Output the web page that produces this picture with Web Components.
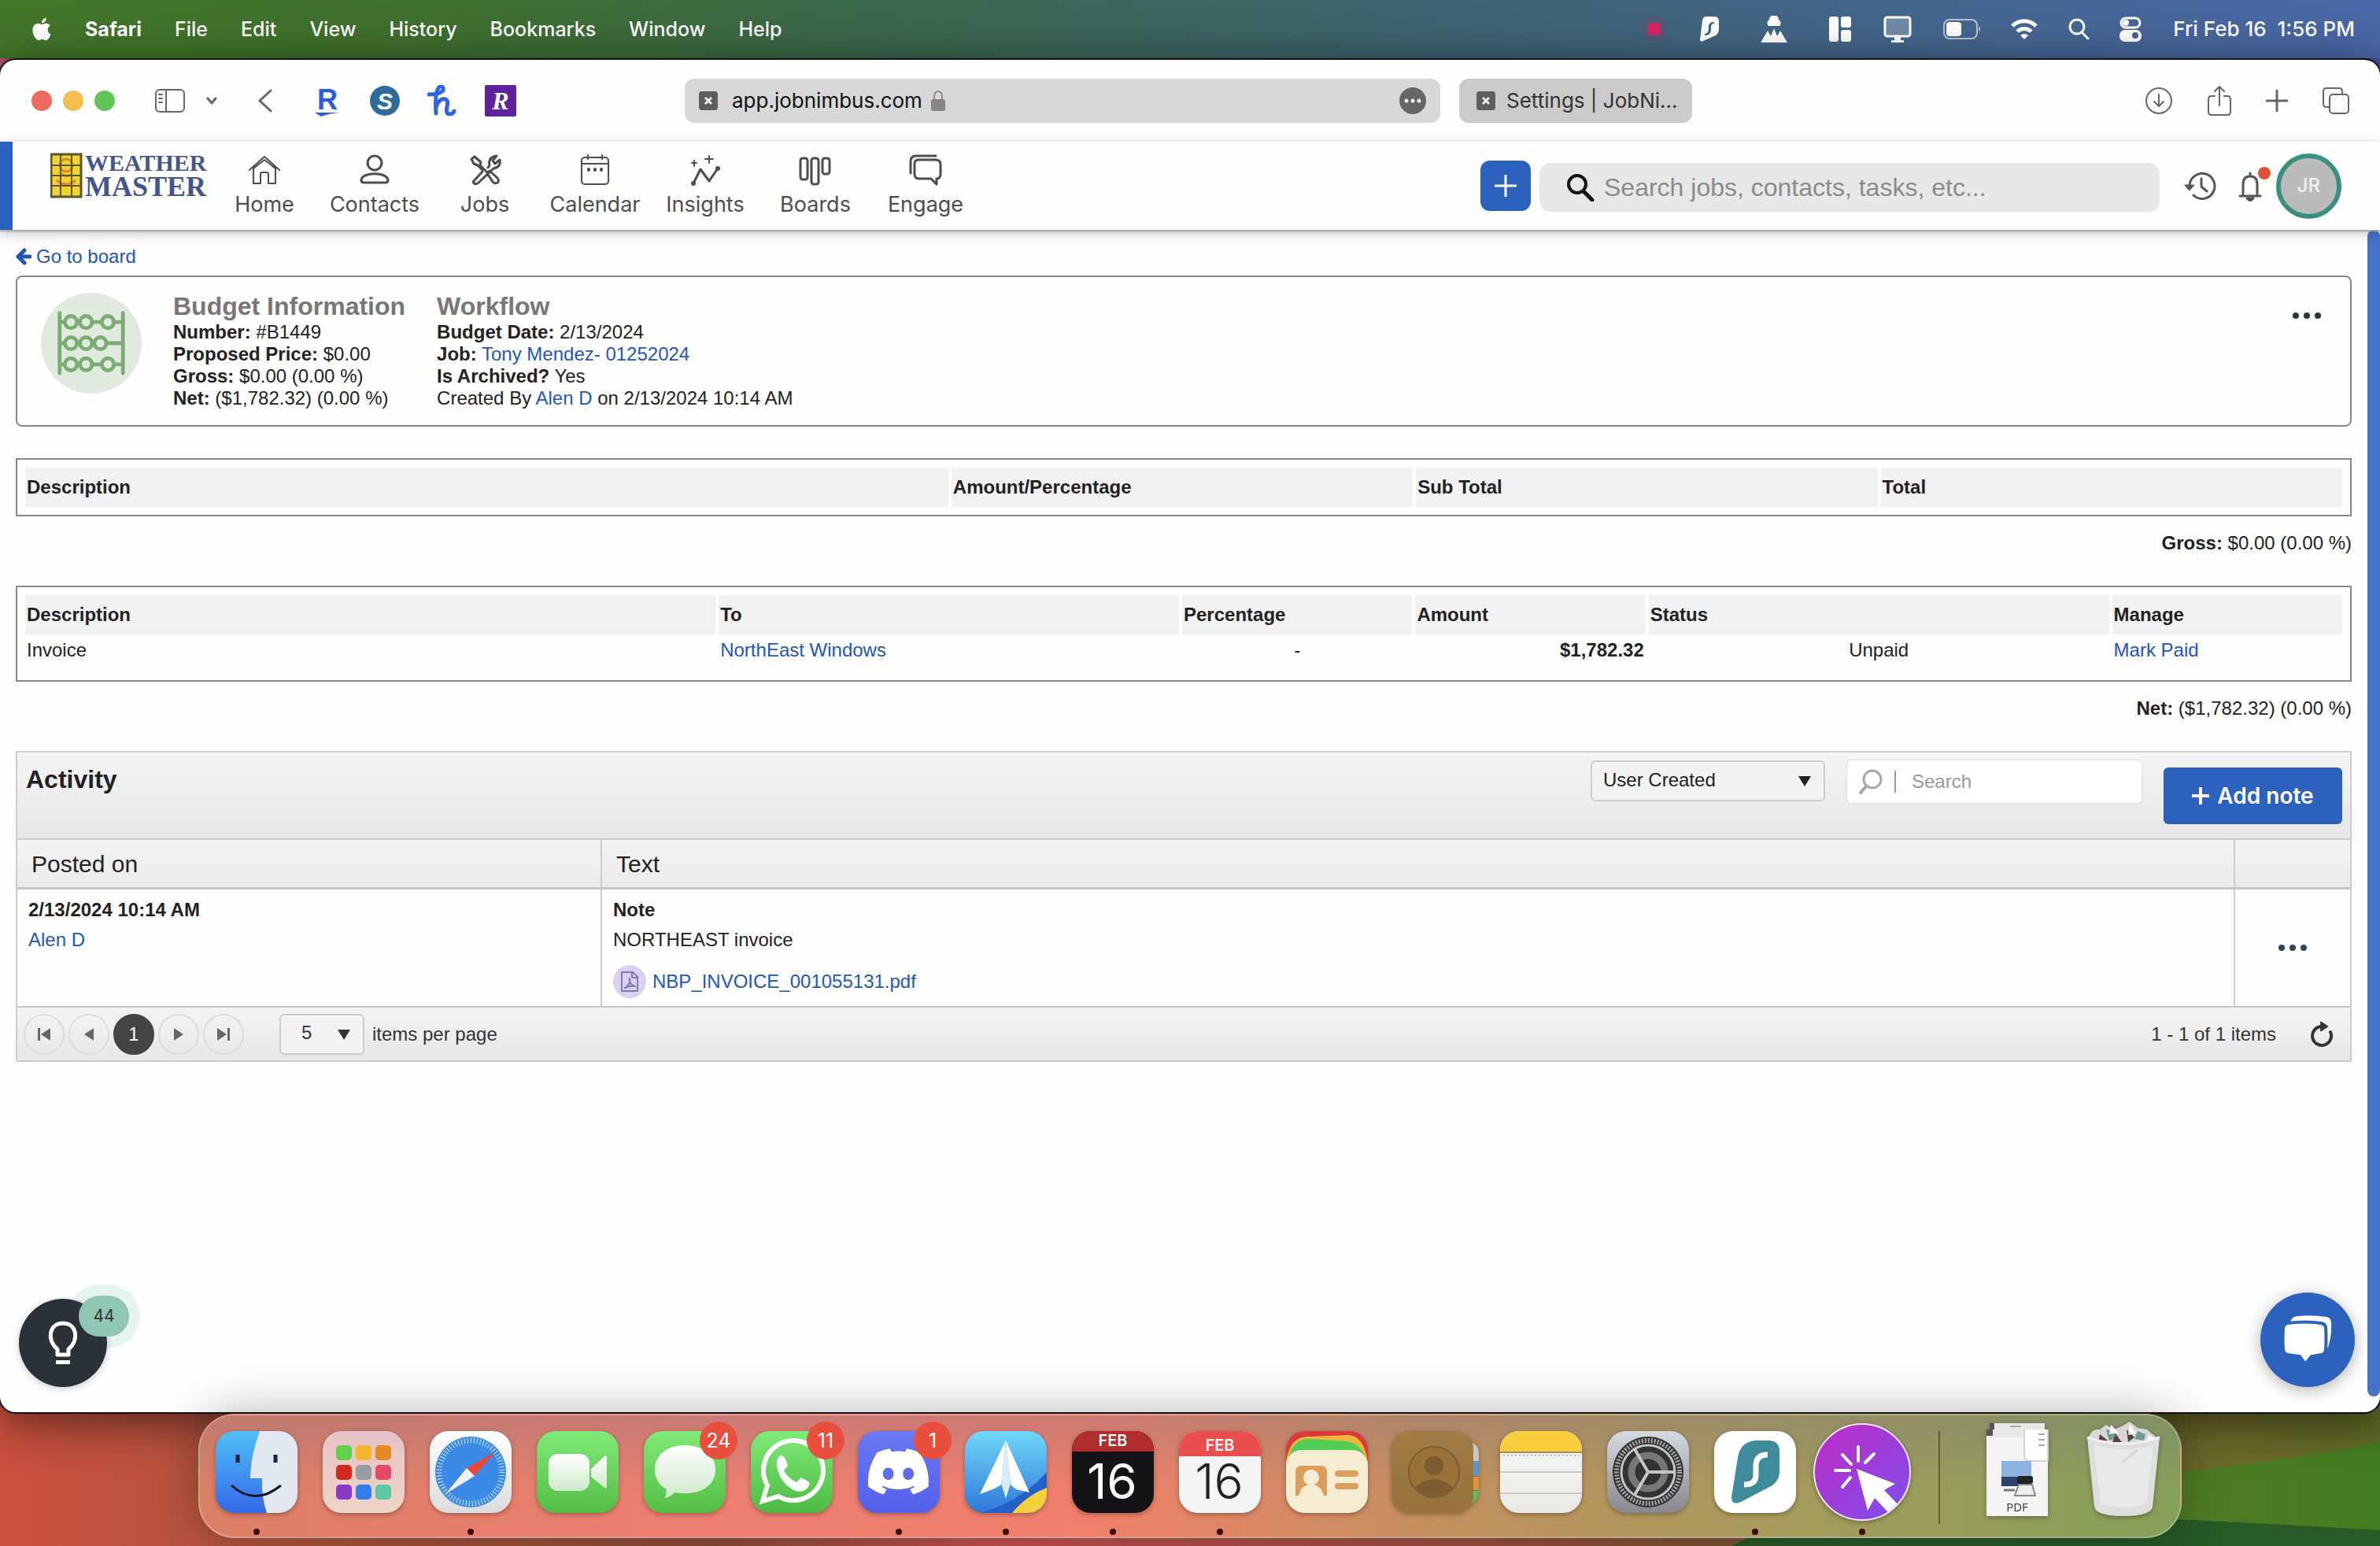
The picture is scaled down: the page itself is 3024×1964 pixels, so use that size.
<!DOCTYPE html>
<html lang="en">
<head>
<meta charset="utf-8">
<title>app.jobnimbus.com</title>
<style>
    html, body { margin: 0; min-height: 100vh; }
    body {
        background: #3f5f63;
        font-family: "Liberation Sans", Arial, sans-serif;
        font-size: 24px;
        line-height: 28px;
        color: #222;
    }
</style>
</head>
<body>
<desk-top></desk-top>

<script>
const reset = /*css*/`
    *, *::before, *::after { box-sizing: border-box; }
    button, input, select { font: inherit; color: inherit; margin: 0; padding: 0; border: 0; background: none; outline: 0; }
    button { display: flex; align-items: center; justify-content: center; }
    a { color: #2257b4; text-decoration: none; }
    svg { display: block; flex: none; }
    ul { list-style: none; margin: 0; padding: 0; }
    h2 { margin: 0; }
`

class BaseElement extends HTMLElement {
    constructor() {
        super();
        this.shadow = this.attachShadow({ mode: 'open' });
    }

    connectedCallback() {
        this.shadow.innerHTML = `<style>${reset}${this.css()}</style>${this.render()}`
    }

    css() { return "" }
    render() { return "" }
}

/* ---------- icons ---------- */

const line = (w, h, box, body, width = 2, color = "currentColor") =>
    `<svg width="${w}" height="${h}" viewBox="${box}" fill="none" stroke="${color}" stroke-width="${width}" stroke-linecap="round" stroke-linejoin="round">${body}</svg>`

const solid = (w, h, box, body) =>
    `<svg width="${w}" height="${h}" viewBox="${box}" fill="currentColor">${body}</svg>`

const icons = {
    apple: solid(26, 32, "1 0 22 24", `<path d="M12.152 6.896c-.948 0-2.415-1.078-3.96-1.04-2.04.027-3.91 1.183-4.961 3.014-2.117 3.675-.546 9.103 1.519 12.09 1.013 1.454 2.208 3.09 3.792 3.039 1.52-.065 2.09-.987 3.935-.987 1.831 0 2.35.987 3.96.948 1.637-.026 2.676-1.48 3.676-2.948 1.156-1.688 1.636-3.325 1.662-3.415-.039-.013-3.182-1.221-3.22-4.857-.026-3.04 2.48-4.494 2.597-4.559-1.429-2.09-3.623-2.324-4.39-2.376-2-.156-3.675 1.09-4.61 1.09zM15.53 3.83c.843-1.012 1.4-2.427 1.245-3.83-1.207.052-2.662.805-3.532 1.818-.78.896-1.454 2.338-1.273 3.714 1.338.104 2.715-.688 3.559-1.701"/>`),
    record: `<svg width="34" height="36" viewBox="0 0 34 36"><circle cx="17" cy="18" r="14" fill="none" stroke="#8c3a6a" stroke-width="2" opacity=".7"/><rect x="9" y="10" width="16" height="16" rx="3" fill="#d8275c"/></svg>`,
    surf: solid(26, 34, "0 0 26 34", `<path fill-rule="evenodd" d="M9 1h10q6 0 6 6v10q0 5-4 8L5 32q-4 2-4-2L4 6q1-5 5-5zM19 8c-5 0-7 2-7 6 0 5 0 8-5 9v2c6 0 8-3 8-8s0-7 4-7z"/>`),
    peaks: `<svg class="peaks" width="34" height="34" viewBox="0 0 34 34" fill="currentColor"><path d="M10 13a5 5 0 0 1 1-8 6 6 0 0 1 12 0 5 5 0 0 1 1 8zM0 34l9-15 4 7 4-10 4 10 4-7 9 15z"/></svg>`,
    panes: solid(30, 32, "0 0 30 32", `<rect x="1" y="0" width="12" height="32" rx="3"/><rect x="16" y="0" width="13" height="14" rx="3"/><rect x="16" y="17" width="13" height="15" rx="3"/>`),
    display: `<svg width="36" height="34" viewBox="0 0 36 34"><rect x="2" y="2" width="32" height="24" rx="3" fill="#6f8ba5" stroke="#fff" stroke-width="3"/><path d="M14 27h8v4h4v3H10v-3h4z" fill="#fff"/></svg>`,
    battery: `<svg width="48" height="26" viewBox="0 0 48 26"><rect x="1" y="1" width="42" height="24" rx="7" fill="none" stroke="#b5c3d2" stroke-width="2"/><rect x="4" y="4" width="19" height="18" rx="4" fill="#fff"/><path d="M45 9v8q4-4 0-8z" fill="#b5c3d2"/></svg>`,
    wifi: `<svg width="34" height="28" viewBox="0 0 34 28" fill="none" stroke="#fff" stroke-width="5"><path d="M2 10a21 21 0 0 1 30 0"/><path d="M8 17a13 13 0 0 1 18 0"/><path d="M17 27l-5-5a7 7 0 0 1 10 0z" fill="#fff" stroke="none"/></svg>`,
    spotlight: line(28, 30, "0 0 28 30", `<circle cx="12" cy="12" r="9"/><path d="M19 20l7 7"/>`, 3),
    control: `<svg width="28" height="32" viewBox="0 0 28 32"><rect x="2" y="2" width="24" height="12" rx="6" fill="none" stroke="#fff" stroke-width="3"/><circle cx="8" cy="8" r="4" fill="#fff"/><rect x="0" y="17" width="28" height="15" rx="7" fill="#fff"/><circle cx="20" cy="24" r="4" fill="#44638f"/></svg>`,

    sidebar: line(40, 32, "0 0 40 32", `<rect x="2" y="2" width="36" height="28" rx="5"/><path d="M15 2v28M6 8h4M6 13h4M6 18h4"/>`, 2),
    down: line(14, 10, "0 0 14 10", `<path d="M2 2l5 6 5-6"/>`, 3),
    back: line(18, 30, "0 0 18 30", `<path d="M16 2L2 15l14 13"/>`, 3),
    closeTab: `<svg width="24" height="24" viewBox="0 0 24 24"><rect width="24" height="24" rx="4" fill="#5e5e5e"/><path d="M8 8l8 8M16 8l-8 8" stroke="#eee" stroke-width="3"/></svg>`,
    lock: `<svg width="20" height="28" viewBox="0 0 20 28"><path d="M5 13V8a5 6 0 0 1 10 0v5" fill="none" stroke="#8a8a8a" stroke-width="2"/><rect x="1" y="12" width="18" height="15" rx="3" fill="#858585"/></svg>`,
    more: `<svg width="34" height="34" viewBox="0 0 34 34"><circle cx="17" cy="17" r="17" fill="#666"/><g fill="#eee"><circle cx="9" cy="17" r="2.5"/><circle cx="17" cy="17" r="2.5"/><circle cx="25" cy="17" r="2.5"/></g></svg>`,
    download: line(36, 36, "0 0 36 36", `<circle cx="18" cy="18" r="16"/><path d="M18 10v15M12 19l6 6 6-6"/>`, 2),
    share: line(32, 40, "0 0 32 40", `<path d="M10 14H6q-4 0-4 4v16q0 4 4 4h20q4 0 4-4V18q0-4-4-4h-4M16 26V2M10 8l6-6 6 6"/>`, 2),
    plus: line(28, 28, "0 0 28 28", `<path d="M14 1v26M1 14h26"/>`, 3),
    tabs: line(36, 36, "0 0 36 36", `<rect x="10" y="10" width="24" height="24" rx="4"/><path d="M10 26H6q-4 0-4-4V6q0-4 4-4h16q4 0 4 4v4"/>`, 2),

    home: line(44, 40, "0 0 44 40", `<path d="M3 20L22 3l19 17M8 18v19h9V25q0-2 2-2h6q2 0 2 2v12h9V18L22 7z"/>`, 2),
    contacts: line(44, 40, "0 0 44 40", `<ellipse cx="22" cy="11" rx="9" ry="9"/><path d="M5 33c0-11 34-11 34 0q0 3-4 3H9q-4 0-4-3z"/>`, 3),
    jobs: line(44, 40, "0 0 44 40", `<path d="M5 6l4-3 8 7-1 4 8 8M26 17l2-3q-2-8 5-11l4-1-5 6 3 4 6-5q2 9-8 11L13 37q-4 2-6-2l12-13M5 6l3 6 5 2 6 6M25 24l3-3 10 9q3 4 0 6t-6-1z"/>`, 3),
    calendar: line(44, 40, "0 0 44 40", `<rect x="5" y="4" width="34" height="34" rx="4"/><path d="M5 12h34M13 1v5M31 1v5"/><path d="M14 19v1M22 19v1M30 19v1" stroke-width="4"/>`, 2),
    insights: line(44, 40, "0 0 44 40", `<path d="M7 37l9-18 11 15L38 18" stroke-width="3"/><circle cx="7" cy="37" r="2"/><circle cx="38" cy="18" r="2"/><path d="M27 2v9M22 6h10M8 8v7M5 11h6"/>`, 2),
    boards: line(44, 40, "0 0 44 40", `<rect x="3" y="5" width="9" height="27" rx="3"/><rect x="17" y="5" width="9" height="33" rx="3"/><rect x="31" y="5" width="9" height="20" rx="3"/>`, 3),
    engage: line(44, 40, "0 0 44 40", `<path d="M13 7h22q6 0 6 6v12q0 6-5 6v7l-7-7H14q-6 0-6-6V12q0-5 5-5z"/><path d="M3 24V9q0-7 7-7h25"/>`, 3),
    find: line(36, 36, "0 0 36 36", `<circle cx="14" cy="14" r="11"/><path d="M22 23l11 11" stroke-width="5"/>`, 4),
    history: line(42, 38, "0 0 42 38", `<path d="M7 20a16 16 0 1 1 5 11M22 10v10l7 6"/><path d="M1 18h12l-6 7z" fill="currentColor" stroke-width="1"/>`, 3),
    bell: line(32, 40, "0 0 32 40", `<path d="M3 33h26M7 32V18q0-10 9-10t9 10v14M16 8V4"/><path d="M12 36h8l-4 3z" fill="currentColor"/>`, 3),
    arrow: line(20, 22, "0 0 20 22", `<path d="M18 11H4M11 3l-8 8 8 8"/>`, 5),
    abacus: line(92, 84, "0 0 96 84", `<path d="M6 2v80M90 2v80M6 14h84M6 42h84M6 70h84"/><g fill="#e0eade"><circle cx="21" cy="14" r="8"/><circle cx="41" cy="14" r="8"/><circle cx="70" cy="14" r="8"/><circle cx="21" cy="42" r="8"/><circle cx="41" cy="42" r="8"/><circle cx="60" cy="42" r="8"/><circle cx="21" cy="70" r="8"/><circle cx="41" cy="70" r="8"/><circle cx="70" cy="70" r="8"/></g>`, 5, "#7bac74"),
    dots: solid(38, 10, "0 0 38 10", `<circle cx="5" cy="5" r="4"/><circle cx="19" cy="5" r="4"/><circle cx="33" cy="5" r="4"/>`),
    caret: solid(16, 14, "0 0 16 14", `<path d="M0 1h16L8 14z"/>`),
    lens: line(32, 34, "0 0 32 34", `<circle cx="18" cy="14" r="11"/><path d="M10 23l-7 8" stroke-width="4"/>`, 3, "#a8a8a8"),
    pdf: line(42, 42, "0 0 42 42", `<circle cx="21" cy="21" r="21" fill="#d8d2ec" stroke="none"/><path d="M11 9h14l6 6v18H11zM24 9v7h7M15 29q8-5 6-12-1 8 7 10-7-1-13 2z"/>`, 2, "#8478b4"),
    first: solid(20, 16, "0 0 20 16", `<path d="M2 0h3v16H2zM18 0v16L6 8z"/>`),
    prev: solid(20, 16, "0 0 20 16", `<path d="M16 0v16L4 8z"/>`),
    next: solid(20, 16, "0 0 20 16", `<path d="M4 0v16l12-8z"/>`),
    last: solid(20, 16, "0 0 20 16", `<path d="M15 0h3v16h-3zM2 0v16l12-8z"/>`),
    refresh: line(32, 34, "0 0 32 34", `<path d="M15 7A12 12 0 1 0 27 14"/><path d="M15 1l9 6-9 6z" fill="currentColor" stroke-width="1"/>`, 4),
    bulb: line(40, 56, "0 0 40 56", `<path d="M13 43V36C-1 25 2 3 20 3s21 22 7 33v7z"/><path d="M12 51h16v3H12z" fill="currentColor" stroke-width="2"/>`, 5),
    chat: solid(64, 62, "0 0 64 62", `<path d="M11 6q2-4 7-5 20-2 38 1 6 1 6 7 1 16-4 32l-5 2V14q-20-6-42-6z"/><path d="M6 10q22-3 44 0 4 1 5 5 1 15 0 29-1 5-5 6l-13 2-8 10-7-10-15-2q-5-1-6-6-1-14 0-28 1-5 5-6z" stroke="#2c62bd" stroke-width="4"/>`)
}

/* ---------- desktop and menu bar ---------- */

class DeskTop extends BaseElement {
    css() {
        return /*css*/`
            :host { display: flex; flex-direction: column; min-height: 100vh; position: relative; overflow: hidden; }
            .paper { position: absolute; left: 0; bottom: 0; width: 100%; height: 200px; }
            .corner { position: absolute; top: 70px; left: 0; width: 100%; height: 60px; background: linear-gradient(90deg, #b75a78, #14181c 2%, #14181c 98%, #4a4fb0); }
            main {
                flex: 1; display: flex; flex-direction: column; position: relative; min-width: 0;
                margin-top: 2px; background: #fefefe; border-radius: 20px; overflow: hidden;
                box-shadow: 0 0 0 2px #151015, 0 10px 60px rgba(0, 0, 0, .6);
            }
            mac-dock { margin: 2px auto 10px; }
        `
    }

    render() {
        return /*html*/`
            <svg class="paper" viewBox="0 0 3024 200" preserveAspectRatio="none">
                <defs>
                    <linearGradient id="sky">
                        <stop offset="0" stop-color="#cb503e"/><stop offset=".1" stop-color="#b3543f"/>
                        <stop offset=".3" stop-color="#8e4c36"/><stop offset=".42" stop-color="#c8524f"/>
                        <stop offset=".65" stop-color="#94503a"/><stop offset=".85" stop-color="#535a22"/>
                        <stop offset=".93" stop-color="#6f6a2b"/><stop offset="1" stop-color="#5d6a25"/>
                    </linearGradient>
                    <linearGradient id="hill"><stop offset="0" stop-color="#66762a"/><stop offset="1" stop-color="#447d22"/></linearGradient>
                </defs>
                <rect width="3024" height="200" fill="url(#sky)"/>
                <path d="M2300 150Q2820 110 3024 68V200H2300z" fill="url(#hill)"/>
                <path d="M2300 150Q2700 160 3024 180V200H2200z" fill="#275a27"/>
            </svg>
            <div class="corner"></div>
            <menu-bar></menu-bar>
            <main>
                <browser-bar></browser-bar>
                <app-header></app-header>
                <budget-page></budget-page>
            </main>
            <mac-dock></mac-dock>
        `
    }
}

class MenuBar extends BaseElement {
    css() {
        return /*css*/`
            :host {
                display: flex; align-items: center; height: 74px; padding: 0 32px 0 40px; position: relative;
                background: linear-gradient(90deg, #43762a 0, #3f6f2d 18%, #3a6849 35%, #3d6370 60%, #44668c 80%, #4a67a8);
                color: #fff; font: 500 25px/30px Inter, "Noto Sans", sans-serif;
            }
            nav, .status, .tail { display: flex; align-items: center; }
            nav { gap: 42px; }
            nav b { font-weight: 700; }
            .status { margin-left: auto; gap: 40px; }
            .peaks { margin: 0 12px; }
            .tail { gap: 38px; }
            time { font-size: 26px; white-space: pre; }
        `
    }

    render() {
        const menus = ["File", "Edit", "View", "History", "Bookmarks", "Window", "Help"]
        return /*html*/`
            <nav>
                ${icons.apple}
                <button><b>Safari</b></button>
                ${menus.map(m => `<button>${m}</button>`).join("")}
            </nav>
            <div class="status">
                ${icons.record}${icons.surf}${icons.peaks}${icons.panes}${icons.display}
                <div class="tail">${icons.battery}${icons.wifi}${icons.spotlight}${icons.control}</div>
                <time>Fri Feb 16  1:56 PM</time>
            </div>
        `
    }
}

/* ---------- browser toolbar ---------- */

class BrowserBar extends BaseElement {
    css() {
        return /*css*/`
            :host {
                display: grid; grid-template-columns: 870px minmax(0, 1fr) 296px 874px; align-items: center;
                height: 104px; flex: none; color: #666; font: 400 26px/30px Inter, "Noto Sans", sans-serif;
            }
            .left, .right, .bar { display: flex; align-items: center; }
            .left { padding-left: 40px; }
            .light { width: 26px; height: 26px; border-radius: 50%; margin-right: 14px; }
            .left .side { margin-left: 36px; }
            .left .drop { margin: 0 52px 0 26px; }
            .marks { display: flex; align-items: center; gap: 35px; margin-left: 51px; }
            .bar { height: 56px; border-radius: 12px; background: #d8d8d8; padding: 0 18px; color: #111; }
            .bar span { margin-left: 18px; }
            .bar button { margin-left: 10px; }
            .bar .more { margin-left: auto; }
            .tab { background: #cbcbcb; padding: 0 0 0 22px; color: #333; }
            .tab span { margin-left: 14px; }
            .gap { margin-right: 24px; }
            .right { justify-content: flex-end; gap: 43px; padding-right: 38px; }
        `
    }

    render() {
        return /*html*/`
            <div class="left">
                <i class="light" style="background:#ec6a5e"></i>
                <i class="light" style="background:#f4bd4f"></i>
                <i class="light" style="background:#61c454"></i>
                <button class="side" aria-label="Sidebar">${icons.sidebar}</button>
                <button class="drop" aria-label="Tab groups">${icons.down}</button>
                <button aria-label="Back">${icons.back}</button>
                <div class="marks">
                    <svg width="38" height="48" viewBox="0 0 38 48"><text x="6" y="35" font-family="Liberation Sans" font-weight="700" font-size="36" fill="#2a5be0">R</text><path d="M3 39h32q-14 1-24 5z" fill="#2a5be0"/></svg>
                    <svg width="38" height="40" viewBox="0 0 38 40"><circle cx="19" cy="20" r="19" fill="#2d6c9b"/><text x="19" y="31" text-anchor="middle" font-family="Liberation Sans" font-style="italic" font-weight="700" font-size="30" fill="#fff">S</text></svg>
                    <svg width="38" height="40" viewBox="0 0 38 40" fill="none" stroke="#2f65e4" stroke-width="5" stroke-linecap="round"><path d="M2 12q14 0 18-5 1-6-4-5-7 4-5 34M11 28q4-12 12-10 4 2 2 9-2 10 3 10 5 0 6-4"/></svg>
                    <svg width="40" height="40" viewBox="0 0 40 40"><rect width="40" height="40" rx="2" fill="#5f249b"/><text x="20" y="31" text-anchor="middle" font-family="Liberation Serif" font-style="italic" font-weight="700" font-size="32" fill="#fff">R</text></svg>
                </div>
            </div>
            <div class="bar gap">
                ${icons.closeTab}<span>app.jobnimbus.com</span>
                <button aria-label="Site security">${icons.lock}</button>
                <button class="more" aria-label="More">${icons.more}</button>
            </div>
            <div class="bar tab">${icons.closeTab}<span>Settings | JobNi...</span></div>
            <div class="right">
                <button aria-label="Downloads">${icons.download}</button>
                <button aria-label="Share">${icons.share}</button>
                <button aria-label="New tab">${icons.plus}</button>
                <button aria-label="Tab overview">${icons.tabs}</button>
            </div>
        `
    }
}

/* ---------- app header ---------- */

class NavItem extends BaseElement {
    css() {
        return /*css*/`
            :host { display: block; width: 140px; }
            a { display: flex; flex-direction: column; align-items: center; gap: 8px; color: #4d4d4d; font: 400 27px/32px Inter, "Noto Sans", sans-serif; }
        `
    }

    render() {
        return /*html*/`<a href="#">${icons[this.getAttribute("icon")]}<slot></slot></a>`
    }
}

class AppHeader extends BaseElement {
    css() {
        return /*css*/`
            :host {
                display: flex; align-items: center; height: 112px; flex: none; position: relative;
                border-left: 16px solid #2c62bd; padding: 0 49px 0 48px; background: #fefefe;
                box-shadow: 0 2px 2px #a5a5a5, 0 4px 14px rgba(0, 0, 0, .25);
            }
            nav { display: flex; }
            .logo { margin-bottom: 24px; }
            .tools { margin-left: auto; display: flex; align-items: center; color: #555; }
            .add { width: 64px; height: 64px; border-radius: 12px; background: #2c62bd; color: #fff; margin-right: 11px; }
            label { display: flex; align-items: center; width: 788px; height: 62px; margin-top: 3px; border-radius: 14px; background: #e8e8e8; padding-left: 34px; color: #111; gap: 12px; }
            input { flex: 1; font-size: 32px; line-height: 36px; color: #333; }
            input::placeholder { color: #8b8b8b; opacity: 1; }
            .tools .history { margin: 0 26px 0 31px; }
            .bell { position: relative; margin-right: 17px; }
            .bell i { position: absolute; right: -10px; top: -4px; width: 16px; height: 16px; border-radius: 50%; background: #e0503d; }
            .avatar { width: 83px; height: 83px; border-radius: 50%; border: 6px solid #3a9080; background: #bbb; color: #f2f2f2; font: 500 24px/28px Inter, sans-serif; }
        `
    }

    render() {
        return /*html*/`
            <svg class="logo" width="202" height="74" viewBox="0 -8 202 74" role="img">
                <rect x="1" y="1" width="38" height="54" fill="#f3d32e" stroke="#5a5533" stroke-width="3"/>
                <g fill="none" stroke="#dc8a25" stroke-width="3"><circle cx="20" cy="15" r="8"/><path d="M8 34q12 10 24 0M12 24q8 8 16 2"/></g>
                <path d="M13 1v54M27 1v54M1 15h38M1 28h38M1 41h38" stroke="#5a5533" stroke-width="2"/>
                <g font-family="Liberation Serif" font-weight="700" fill="#44558c"><text x="44" y="22" font-size="30">WEATHER</text><text x="44" y="54" font-size="36">MASTER</text></g>
            </svg>
            <nav>
                <nav-item icon="home">Home</nav-item>
                <nav-item icon="contacts">Contacts</nav-item>
                <nav-item icon="jobs">Jobs</nav-item>
                <nav-item icon="calendar">Calendar</nav-item>
                <nav-item icon="insights">Insights</nav-item>
                <nav-item icon="boards">Boards</nav-item>
                <nav-item icon="engage">Engage</nav-item>
            </nav>
            <div class="tools">
                <button class="add" aria-label="Add">${icons.plus}</button>
                <label aria-label="Search">${icons.find}<input type="text" placeholder="Search jobs, contacts, tasks, etc..."></label>
                <button class="history" aria-label="History">${icons.history}</button>
                <button class="bell" aria-label="Notifications">${icons.bell}<i></i></button>
                <button class="avatar">JR</button>
            </div>
        `
    }
}

/* ---------- page ---------- */

class BudgetPage extends BaseElement {
    css() {
        return /*css*/`
            :host { display: flex; flex: 1; }
            .content { flex: 1; min-width: 0; padding: 20px 20px 0; }
            .scroll { width: 16px; background: #4673c8; border-radius: 8px; margin-bottom: 20px; }
            .back { display: flex; align-items: center; gap: 6px; margin-bottom: 10px; }
            .total { text-align: right; margin: 20px 0 40px; }
            .float { position: absolute; bottom: 32px; border-radius: 50%; color: #fff; }
            .tips { left: 24px; width: 112px; height: 112px; isolation: isolate; }
            /* the halo lies under the dark disc, the count over it */
            .tips::before { content: ""; position: absolute; z-index: -2; left: 62px; top: -18px; width: 92px; height: 80px; border-radius: 40px; background: #e6f3ee; }
            .tips::after { content: ""; position: absolute; z-index: -1; inset: 0; border-radius: 50%; background: #2a3238; box-shadow: 0 2px 10px rgba(0, 0, 0, .2); }
            .tips span {
                position: absolute; left: 76px; top: -4px; width: 64px; height: 52px; border-radius: 26px;
                background: #8fc7b4; color: #333; line-height: 52px; font-family: Inter, sans-serif; font-size: 21px;
            }
            .chat { right: 32px; width: 120px; height: 120px; background: #2c62bd; box-shadow: 0 4px 20px rgba(0, 0, 0, .3); }
        `
    }

    render() {
        return /*html*/`
            <div class="content">
                <a class="back" href="#">${icons.arrow}Go to board</a>
                <budget-card></budget-card>
                <line-table>
                    <table>
                        <colgroup><col style="width:40%"><col style="width:20%"><col style="width:20%"><col></colgroup>
                        <tr><th>Description</th><th>Amount/Percentage</th><th>Sub Total</th><th>Total</th></tr>
                    </table>
                </line-table>
                <div class="total"><b>Gross:</b> $0.00 (0.00 %)</div>
                <line-table rows>
                    <table>
                        <colgroup><col style="width:30%"><col style="width:20%"><col style="width:10%"><col style="width:10%"><col style="width:20%"><col></colgroup>
                        <tr><th>Description</th><th>To</th><th>Percentage</th><th>Amount</th><th>Status</th><th>Manage</th></tr>
                        <tr><td>Invoice</td><td><a href="#">NorthEast Windows</a></td><td align="center">-</td><td align="right"><b>$1,782.32</b></td><td align="center">Unpaid</td><td><a href="#">Mark Paid</a></td></tr>
                    </table>
                </line-table>
                <div class="total"><b>Net:</b> ($1,782.32) (0.00 %)</div>
                <activity-grid></activity-grid>
            </div>
            <div class="scroll"></div>
            <button class="float tips" aria-label="Tips">${icons.bulb}<span>44</span></button>
            <button class="float chat" aria-label="Chat">${icons.chat}</button>
        `
    }
}

class BudgetCard extends BaseElement {
    css() {
        return /*css*/`
            :host { display: flex; align-items: flex-start; height: 192px; border: 2px solid #888; border-radius: 8px; padding: 18px 36px 0 30px; margin-bottom: 40px; }
            .mark { width: 128px; height: 128px; border-radius: 50%; background: #e0eade; display: flex; align-items: center; justify-content: center; margin: 2px 40px 0 0; }
            .info { margin-right: 40px; }
            h2 { font-size: 32px; line-height: 38px; color: #777; }
            .menu { margin: 26px 0 0 auto; color: #2c3744; }
        `
    }

    render() {
        return /*html*/`
            <div class="mark">${icons.abacus}</div>
            <div class="info">
                <h2>Budget Information</h2>
                <div><b>Number:</b> #B1449</div>
                <div><b>Proposed Price:</b> $0.00</div>
                <div><b>Gross:</b> $0.00 (0.00 %)</div>
                <div><b>Net:</b> ($1,782.32) (0.00 %)</div>
            </div>
            <div class="info">
                <h2>Workflow</h2>
                <div><b>Budget Date:</b> 2/13/2024</div>
                <div><b>Job:</b> <a href="#">Tony Mendez- 01252024</a></div>
                <div><b>Is Archived?</b> Yes</div>
                <div>Created By <a href="#">Alen D</a> on 2/13/2024 10:14 AM</div>
            </div>
            <button class="menu" aria-label="Options">${icons.dots}</button>
        `
    }
}

/* Takes a table's rows from its user and draws them in its own box. */
class LineTable extends BaseElement {
    connectedCallback() {
        this.source = this.source || this.innerHTML
        super.connectedCallback()
    }

    css() {
        return /*css*/`
            :host { display: block; border: 2px solid #888; padding: 6px; }
            :host([rows]) { padding-bottom: 20px; }
            table { width: 100%; border-spacing: 4px; table-layout: fixed; }
            th { background: #f2f2f2; text-align: left; height: 50px; padding: 0 2px; }
            td { padding: 2px 2px 0; }
        `
    }

    render() { return this.source }
}

class ActivityGrid extends BaseElement {
    css() {
        return /*css*/`
            :host { display: block; border: 2px solid #ccc; }
            .head { display: flex; align-items: flex-start; height: 109px; padding: 10px 10px 0 11px; background: linear-gradient(#f4f4f4, #e7e7e7); }
            h2 { font-size: 32px; line-height: 36px; margin: 6px auto 0 0; }
            .pick { position: relative; display: flex; align-items: center; margin-right: 28px; }
            select { appearance: none; height: 52px; border: 2px solid #ccc; border-radius: 6px; background: #f3f3f3; padding-left: 14px; width: 298px; line-height: 28px; padding-bottom: 3px; }
            .pick svg { position: absolute; right: 18px; pointer-events: none; }
            .search { display: flex; align-items: center; width: 374px; height: 54px; background: #fff; border-radius: 6px; box-shadow: 0 0 3px #ccc; padding-left: 14px; margin-right: 28px; }
            .search input { width: 240px; margin-left: 14px; padding-left: 20px; border-left: 2px solid #999; }
            .search input::placeholder { color: #999; opacity: 1; }
            .note { width: 227px; height: 72px; border-radius: 6px; background: #2c62bd; color: #fff; font: 600 28px/32px Inter, sans-serif; gap: 10px; margin-top: 9px; }
            .note svg { width: 22px; height: 22px; stroke-width: 5px; }
            table { width: 100%; border-collapse: collapse; table-layout: fixed; border-top: 2px solid #ccc; }
            th { height: 62px; font-weight: 400; font-size: 30px; line-height: 34px; text-align: left; padding: 2px 18px 0; background: linear-gradient(#f4f4f4, #eaeaea); border-bottom: 3px solid #c6c6c6; }
            td { height: 150px; vertical-align: top; padding: 7px 14px 0; line-height: 38px; }
            th + th, td + td { border-left: 2px solid #ccc; }
            td:last-child { vertical-align: middle; color: #2c4560; padding-top: 0; }
            td button { margin: 0 auto; }
            .file { display: flex; align-items: center; gap: 8px; height: 44px; margin-top: 12px; }
            .foot { display: flex; align-items: center; height: 69px; background: linear-gradient(#f4f4f4, #e7e7e7); border-top: 2px solid #c6c6c6; padding: 0 20px 0 8px; color: #333; }
            .foot ul { display: flex; gap: 5px; margin-right: 45px; }
            .foot li button { width: 52px; height: 52px; border-radius: 50%; border: 2px solid #ddd; color: #666; }
            .foot li .on { background: #444; border-color: #444; color: #fff; }
            .foot .pick { margin-right: 10px; }
            .foot select { width: 108px; padding-left: 26px; }
            .foot .count { margin: 0 42px 0 auto; }
        `
    }

    render() {
        return /*html*/`
            <div class="head">
                <h2>Activity</h2>
                <div class="pick"><select aria-label="Activity type"><option>User Created</option></select>${icons.caret}</div>
                <label class="search" aria-label="Search activity">${icons.lens}<input type="text" placeholder="Search"></label>
                <button class="note">${icons.plus}Add note</button>
            </div>
            <table>
                <colgroup><col style="width:742px"><col><col style="width:147px"></colgroup>
                <tr><th>Posted on</th><th>Text</th><th></th></tr>
                <tr>
                    <td><b>2/13/2024 10:14 AM</b><br><a href="#">Alen D</a></td>
                    <td><b>Note</b><br>NORTHEAST invoice<a class="file" href="#">${icons.pdf}NBP_INVOICE_001055131.pdf</a></td>
                    <td><button aria-label="Row options">${icons.dots}</button></td>
                </tr>
            </table>
            <div class="foot">
                <ul>
                    <li><button aria-label="First page">${icons.first}</button></li>
                    <li><button aria-label="Previous page">${icons.prev}</button></li>
                    <li><button class="on">1</button></li>
                    <li><button aria-label="Next page">${icons.next}</button></li>
                    <li><button aria-label="Last page">${icons.last}</button></li>
                </ul>
                <div class="pick"><select id="size"><option>5</option></select>${icons.caret}</div>
                <label for="size">items per page</label>
                <span class="count">1 - 1 of 1 items</span>
                <button aria-label="Refresh">${icons.refresh}</button>
            </div>
        `
    }
}

/* ---------- dock ---------- */

const grad = (a, b) => `<defs><linearGradient id="g" x2="0" y2="1"><stop stop-color="${a}"/><stop offset="1" stop-color="${b}"/></linearGradient><linearGradient id="w" x2="0" y2="1"><stop stop-color="#fff"/><stop offset="1" stop-color="#cfe8cb"/></linearGradient><clipPath id="c"><rect width="104" height="104" rx="24"/></clipPath></defs>`
const tile = (a, b, body) => `${grad(a, b)}<g clip-path="url(#c)"><rect width="104" height="104" fill="url(#g)"/>${body}</g>`
const day = (top, bottom, ink, band, weight) => tile(bottom, bottom, `
    <rect width="104" height="${band}" fill="${top}"/>
    <g font-family="Inter" text-anchor="middle"><text x="52" y="${band - 7}" font-size="20" font-weight="600" fill="#fff">FEB</text>
    <text x="51" y="86" font-size="62" font-weight="${weight}" fill="${ink}">16</text></g>`)

const apps = {
    finder: tile("#4fc0f8", "#3468e8", `<path d="M56 0q-12 34-12 60h15q-1 24 6 44h39V0z" fill="#e2e7f0"/><path d="M28 30v10M76 30v10" stroke="#17233c" stroke-width="5"/><path d="M20 69q30 27 63 0" fill="none" stroke="#101722" stroke-width="3"/>`),
    launchpad: tile("#e6c3c6", "#f0d4c6", ["#64d14e", "#f5b52e", "#e38a26", "#cf2a20", "#9a9ca4", "#e54b66", "#8a37c8", "#2f7ff0", "#5cc7a6"].map((c, i) => `<rect x="${17 + i % 3 * 25}" y="${18 + Math.floor(i / 3) * 25}" width="20" height="19" rx="5" fill="${c}"/>`).join("")),
    safari: tile("#fff", "#dcdcdf", `<circle cx="52" cy="52" r="45" fill="#3c8ae8"/><circle cx="52" cy="52" r="40" fill="none" stroke="#d5e8fb" stroke-width="7" stroke-dasharray="1 3"/><path d="M84 26L57 57 47 47z" fill="#e8473c"/><path d="M20 80l27-33 10 10z" fill="#f4f4f4"/>`),
    facetime: tile("#80ea78", "#55bd45", `<rect x="15" y="29" width="52" height="47" rx="12" fill="url(#w)"/><path d="M69 48l17-16q3-2 3 2v36q0 4-3 2L69 58z" fill="url(#w)"/>`),
    messages: tile("#80ea78", "#55bd45", `<path d="M52 18c-24 0-38 14-38 31 0 12 6 20 15 25q0 7-3 11 8-1 13-7c30 5 52-7 52-29 0-17-15-31-39-31z" fill="url(#w)"/>`),
    whatsapp: tile("#80ea78", "#4dbb43", `<path d="M15 89l6-20A38 38 0 1 1 35 83z" fill="none" stroke="#fff" stroke-width="6"/><path d="M36 32q5-3 8 4l3 8-5 6q5 10 16 15l6-6 9 5q3 2 0 7-6 8-16 5Q38 68 33 45q-1-8 3-13z" fill="#fff"/>`),
    discord: tile("#6a78f2", "#5560ea", `<path transform="translate(13 13) scale(3.2)" fill="#fff" d="M20.317 4.37a19.79 19.79 0 0 0-4.885-1.515l-.079.037c-.211.375-.445.865-.608 1.25-1.845-.276-3.68-.276-5.487 0a12 12 0 0 0-.618-1.25l-.078-.037A19.74 19.74 0 0 0 3.677 4.37C.533 9.046-.319 13.58.099 18.058c2.053 1.508 4.041 2.423 5.993 3.03.495-.6.957-1.3 1.31-2.022-.7-.25-1.322-.6-1.914-.998l.45-.3c3.928 1.793 8.18 1.793 12.14 0l.45.3c-.592.398-1.214.748-1.914.998.353.722.815 1.422 1.309 2.022 1.961-.607 3.95-1.522 6.003-3.03.5-5.177-.838-9.674-3.549-13.688zM8.02 15.331c-1.183 0-2.157-1.086-2.157-2.419s.956-2.419 2.157-2.419 2.176 1.095 2.157 2.419c0 1.333-.956 2.419-2.157 2.419zm7.975 0c-1.183 0-2.157-1.086-2.157-2.419s.955-2.419 2.157-2.419 2.176 1.095 2.157 2.419c0 1.333-.946 2.419-2.157 2.419z"/>`),
    spark: tile("#70d8fb", "#2f78d8", `<path d="M20 104Q70 90 104 52v52z" fill="#2560c8"/><path d="M60 104q18-22 44-32v32z" fill="#f5cf3e"/><path d="M52 12L19 80l19-7 8-5z" fill="#fff"/><path d="M52 12l30 66-17-4-7-6z" fill="#fff"/><path d="M52 14l6 52-6 20-6-20z" fill="#d7ebf8"/>`),
    fantastical: day("#b12d2d", "#141416", "#fff", 26, 400),
    calendar: day("#ea4f4d", "#f5f5f5", "#222", 32, 300),
    cards: tile("#d93a3a", "#d93a3a", `<path d="M0 40Q4 6 30 7l50-2q20 2 24 36z" fill="#f2b53c"/><path d="M0 46Q6 8 30 10l46 3q24 2 28 34v57H0z" fill="#52ce55"/><rect y="24" width="104" height="80" rx="20" fill="#f6ecd2"/><path d="M12 82V52q0-8 8-8h24q8 0 8 8v30z" fill="#d8a05c"/><circle cx="32" cy="59" r="10" fill="#f6ecd2"/><path d="M16 84q2-16 16-16t16 16z" fill="#f6ecd2"/><path d="M66 54h22M66 70h22" stroke="#d8a05c" stroke-width="8" stroke-linecap="round"/>`),
    contacts: `${grad("#a27c46", "#96713c")}<path d="M98 14q11 3 11 14v12H98z" fill="#c5c7c4"/><path d="M98 38h11v19H98z" fill="#5e95cf"/><path d="M98 58h11v17H98z" fill="#e0913a"/><path d="M98 76h11q0 12-11 17z" fill="#58bd57"/><rect x="-2" width="104" height="104" rx="22" fill="url(#g)"/><circle cx="52" cy="52" r="32" fill="#987238" stroke="#7d5c31" stroke-width="2"/><circle cx="52" cy="44" r="12" fill="#7d5c31"/><path d="M27 72q25-22 50 0-25 22-50 0z" fill="#7d5c31"/>`,
    notes: tile("#f8f8f8", "#e9e9e6", `<rect width="104" height="26" fill="#f8cd3e"/><path d="M0 27h104" stroke="#a39154" stroke-width="2"/><path d="M4 31h96" stroke="#b4b4b4" stroke-width="2" stroke-dasharray="2 3"/><path d="M0 52h104M0 79h104" stroke="#ccc" stroke-width="2"/>`),
    settings: tile("#d5dbe2", "#87878d", `<circle cx="52" cy="52" r="45" fill="#333"/><circle cx="52" cy="52" r="40" fill="none" stroke="#aaa" stroke-width="6" stroke-dasharray="2 2"/><circle cx="52" cy="52" r="34" fill="none" stroke="#c4c6c8" stroke-width="3"/><circle cx="52" cy="52" r="21" fill="none" stroke="#777" stroke-width="9"/><path d="M52 52h34M52 52L35 23M52 52L35 81" stroke="#c4c6c8" stroke-width="4"/>`),
    surfshark: tile("#fff", "#fff", `<path d="M52 12h17q14 0 14 14v26q0 10-9 17L34 90q-12 5-12-6l8-50q3-20 22-22z" fill="#3f8b9b"/><path d="M68 30q-15 0-15 14v12q0 12-15 12" fill="none" stroke="#fff" stroke-width="7"/>`),
    click: `<defs><linearGradient id="g" x1="0" y1="0" x2="1" y2="1"><stop stop-color="#c22bc4"/><stop offset="1" stop-color="#7a50ee"/></linearGradient><clipPath id="c"><circle cx="52" cy="52" r="60"/></clipPath></defs><circle cx="52" cy="52" r="61" fill="url(#g)" stroke="#f5e6fb" stroke-width="2"/><path d="M45 48l49 19-14 8 26 27-11 12-27-29-9 16z" fill="#fff" clip-path="url(#c)"/><path d="M47 20v18M27 30l11 12M67 29L56 40M18 50h18M27 71l10-12" stroke="#fff" stroke-width="4" stroke-linecap="round"/>`,
    pdf: `<path d="M14 6h78v102H14z" fill="#f4f4f4"/><path d="M18-10h70v18H18z" fill="#e8e8e8"/><path d="M18-10h6v8h-6zM14-2h8v8h-8z" fill="#555"/><path d="M62-2v32q0 8 8 8h22V-2" fill="#fff" stroke="#d4d4d4" stroke-width="2"/><path d="M44-6h14M80 4h8M80 11h8M80 18h8" stroke="#aaa" stroke-width="2"/><rect x="33" y="38" width="38" height="20" fill="#8fb2e0"/><rect x="33" y="58" width="38" height="12" fill="#2e4168"/><rect x="53" y="57" width="20" height="10" rx="3" fill="#222"/><path d="M55 68h17l4 14H50z" fill="#eee" stroke="#888" stroke-width="2"/><path d="M36 75h14" stroke="#777" stroke-width="3"/><text x="53" y="102" text-anchor="middle" font-family="Open Sans" font-size="15" fill="#333">PDF</text>`,
    trash: `<path d="M8 8q4-12 14-10l8-6 10 6 10-4 10-6 10 8 12 2 14 12-10 8H16z" fill="#d5d8d6"/><path d="M30-2l10 2 6 8-12 4zM70 0l10 4-2 8-12-2z" fill="#6f9a93"/><path d="M22 4l10 8-12 2zM56-2l10 10-8 6zM42 4l8 10H38z" fill="#5a3f40"/><path d="M36-8l10 10-12 2zM60-9l8 12-10 2zM84 4l8 6-10 2z" fill="#fafafa"/><path d="M6 8q46 16 92 0l-9 88q-2 12-37 12T15 96z" fill="#dedede"/><path d="M14 18q38 10 76 0l-9 74q-29 10-58 0z" fill="#e9e9e9"/><path d="M50 40l20-16" stroke="#d8d8d8" stroke-width="3"/><path d="M6 8q46 16 92 0" fill="none" stroke="#f0f0f0" stroke-width="3"/>`
}

class DockItem extends BaseElement {
    css() {
        return /*css*/`
            :host { display: block; width: 136px; }
            button { position: relative; width: 104px; height: 104px; margin: 0 auto; }
            svg { overflow: visible; filter: drop-shadow(0 2px 3px rgba(0, 0, 0, .3)); }
            .badge { position: absolute; right: -15px; top: -12px; width: 48px; height: 48px; border-radius: 50%; background: #ea4e3d; color: #fff; font: 400 25px/48px Inter, sans-serif; }
            .dot { width: 8px; height: 8px; border-radius: 50%; background: #3a0906; margin: 20px auto 0; }
        `
    }

    render() {
        const badge = this.getAttribute("badge")
        return /*html*/`
            <button aria-label="${this.getAttribute("app")}">
                <svg width="104" height="104" viewBox="0 0 104 104">${apps[this.getAttribute("app")]}</svg>
                ${badge ? `<span class="badge">${badge}</span>` : ""}
            </button>
            ${this.hasAttribute("open") ? `<div class="dot"></div>` : ""}
        `
    }
}

class MacDock extends BaseElement {
    css() {
        return /*css*/`
            :host {
                box-sizing: border-box; display: flex; position: relative; height: 158px; padding: 20px 4px 0; border-radius: 46px;
                border: 2px solid rgba(255, 255, 255, .25);
                background: linear-gradient(rgba(120, 110, 130, .3), rgba(255, 150, 110, 0) 60%), linear-gradient(90deg, #dd7f66, #ec7f72 25%, #f0806c 45%, #c59060 62%, #a89a5c 78%, #86a05a);
                box-shadow: 0 0 60px rgba(0, 0, 0, .3);
            }
            .rule { width: 2px; height: 118px; margin: 0 29px; background: #6c5a35; }
        `
    }

    render() {
        return /*html*/`
            <dock-item app="finder" open></dock-item>
            <dock-item app="launchpad"></dock-item>
            <dock-item app="safari" open></dock-item>
            <dock-item app="facetime"></dock-item>
            <dock-item app="messages" badge="24"></dock-item>
            <dock-item app="whatsapp" badge="11"></dock-item>
            <dock-item app="discord" badge="1" open></dock-item>
            <dock-item app="spark" open></dock-item>
            <dock-item app="fantastical" open></dock-item>
            <dock-item app="calendar" open></dock-item>
            <dock-item app="cards"></dock-item>
            <dock-item app="contacts"></dock-item>
            <dock-item app="notes"></dock-item>
            <dock-item app="settings"></dock-item>
            <dock-item app="surfshark" open></dock-item>
            <dock-item app="click" open></dock-item>
            <div class="rule"></div>
            <dock-item app="pdf"></dock-item>
            <dock-item app="trash"></dock-item>
        `
    }
}

customElements.define("nav-item", NavItem)
customElements.define("dock-item", DockItem)
customElements.define("line-table", LineTable)
customElements.define("budget-card", BudgetCard)
customElements.define("activity-grid", ActivityGrid)
customElements.define("menu-bar", MenuBar)
customElements.define("browser-bar", BrowserBar)
customElements.define("app-header", AppHeader)
customElements.define("budget-page", BudgetPage)
customElements.define("mac-dock", MacDock)
customElements.define("desk-top", DeskTop)
</script>
</body>
</html>
